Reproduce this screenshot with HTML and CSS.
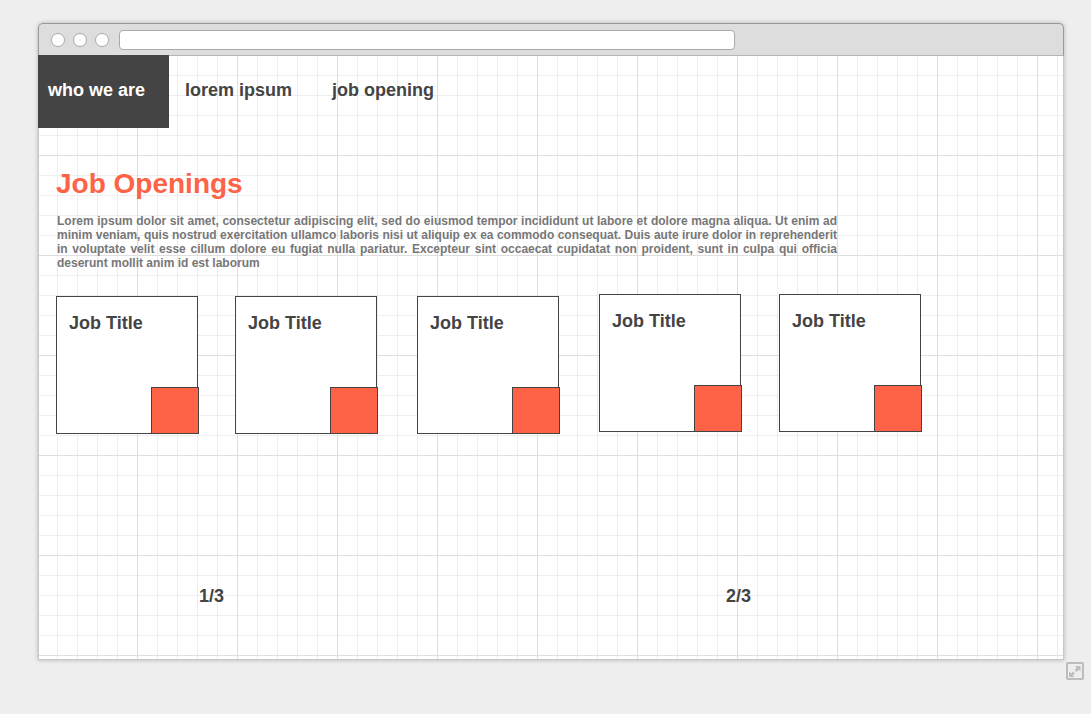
FILE: index.html
```html
<!DOCTYPE html>
<html lang="en">
<head>
  <meta charset="utf-8">
  <title>Job Openings</title>
  <link rel="stylesheet" href="styles.css">
</head>
<body>
  <div class="window">
    <div class="chrome">
      <span class="dot"></span>
      <span class="dot"></span>
      <span class="dot"></span>
      <input class="address" type="text" aria-label="Address">
    </div>
    <div class="canvas">
      <nav class="nav">
        <a class="nav-link nav-link-active" href="#who">who we are</a>
        <a class="nav-link" href="#lorem">lorem ipsum</a>
        <a class="nav-link" href="#jobs">job opening</a>
      </nav>
      <main class="content">
        <h1 class="heading">Job Openings</h1>
        <p class="intro">Lorem ipsum dolor sit amet, consectetur adipiscing elit, sed do eiusmod tempor incididunt ut labore et dolore magna aliqua. Ut enim ad minim veniam, quis nostrud exercitation ullamco laboris nisi ut aliquip ex ea commodo consequat. Duis aute irure dolor in reprehenderit in voluptate velit esse cillum dolore eu fugiat nulla pariatur. Excepteur sint occaecat cupidatat non proident, sunt in culpa qui officia deserunt mollit anim id est laborum</p>
        <div class="cards">
          <article class="card card-low"><h2 class="card-title">Job Title</h2><span class="card-corner"></span></article>
          <article class="card card-low"><h2 class="card-title">Job Title</h2><span class="card-corner"></span></article>
          <article class="card card-low"><h2 class="card-title">Job Title</h2><span class="card-corner"></span></article>
          <article class="card"><h2 class="card-title">Job Title</h2><span class="card-corner"></span></article>
          <article class="card"><h2 class="card-title">Job Title</h2><span class="card-corner"></span></article>
        </div>
        <div class="pages">
          <span>1/3</span>
          <span>2/3</span>
        </div>
      </main>
    </div>
  </div>
  <button class="resize" type="button" aria-label="Expand">
    <svg width="18" height="18" viewBox="0 0 18 18">
      <rect x="1" y="1" width="16" height="16" rx="1" fill="none" stroke="#bdbdbd" stroke-width="2"/>
      <path d="M9 4h5.500v5.500z" fill="#bdbdbd"/>
      <path d="M3 9.500V15h5.500z" fill="#bdbdbd"/>
      <path d="M12.500 6L9.500 9M8 10.500L5 13.500" fill="none" stroke="#bdbdbd" stroke-width="2.500"/>
    </svg>
  </button>
</body>
</html>
```
FILE: styles.css
```css
* {
  box-sizing: border-box;
}

body {
  display: flex;
  flex-direction: column;
  min-height: 100vh;
  margin: 0;
  background: #eee;
  color: #444;
  font-family: "Liberation Sans", Arial, sans-serif;
  font-weight: bold;
}

.window {
  display: flex;
  flex: 1;
  flex-direction: column;
  margin: 23px 27px 2px 38px;
  border-radius: 5px 5px 0 0;
  box-shadow: 0 0 4px rgba(0, 0, 0, 0.25);
}

.chrome {
  display: flex;
  align-items: center;
  gap: 8px;
  height: 33px;
  padding: 0 12px;
  border: 1px solid #999;
  border-bottom-color: #b5b5b5;
  border-radius: 5px 5px 0 0;
  background: #ddd;
}

.dot {
  width: 14px;
  height: 14px;
  border: 1px solid #aaa;
  border-radius: 50%;
  background: #fff;
}

.address {
  width: 616px;
  height: 20px;
  margin-left: 2px;
  padding: 0 6px;
  border: 1px solid #aaa;
  border-radius: 4px;
  background: #fff;
}

.canvas {
  flex: 1;
  border: 1px solid #c8c8c8;
  border-top: 0;
  background-color: #fff;
  background-image:
    linear-gradient(#dfdfdf 1px, transparent 1px),
    linear-gradient(90deg, #dfdfdf 1px, transparent 1px),
    linear-gradient(#eee 1px, transparent 1px),
    linear-gradient(90deg, #eee 1px, transparent 1px);
  background-position: 0 99px, 98px 0, 0 19px, 18px 0;
  background-size: 100px 100px, 100px 100px, 20px 20px, 20px 20px;
}

.nav {
  display: flex;
  gap: 6px;
  margin: -1px 0 0 -1px;
}

.nav-link {
  padding: 25px 24px 28px 10px;
  color: #444;
  font-size: 18px;
  line-height: 20px;
  text-decoration: none;
}

.nav-link-active {
  background: #444;
  color: #fff;
}

.content {
  padding: 40px 18px 0;
}

.heading {
  margin: 0 0 14px -1px;
  color: #ff6347;
  font-size: 28px;
  line-height: 32px;
}

.intro {
  max-width: 780px;
  margin: 0 0 24px;
  color: #777;
  font-size: 12px;
  line-height: 14px;
  text-align: justify;
}

.cards {
  display: grid;
  grid-template-columns: 179px 182px 182px 180px 142px;
  align-items: start;
  margin-left: -1px;
}

.card {
  position: relative;
  width: 142px;
  height: 138px;
  padding: 16px 12px;
  border: 1px solid #444;
  background: #fff;
}

.card-low {
  margin-top: 2px;
}

.card-title {
  margin: 0;
  font-size: 18px;
  line-height: 20px;
}

.card-corner {
  position: absolute;
  right: -2px;
  bottom: -1px;
  width: 48px;
  height: 47px;
  border: 1px solid #444;
  background: #ff6347;
}

.pages {
  display: grid;
  grid-template-columns: 527px auto;
  padding: 152px 0 0 142px;
  font-size: 18px;
  line-height: 20px;
}

.resize {
  align-self: flex-end;
  width: 18px;
  height: 18px;
  margin: 0 7px 34px 0;
  padding: 0;
  border: 0;
  background: none;
}

.resize svg {
  display: block;
}
```
